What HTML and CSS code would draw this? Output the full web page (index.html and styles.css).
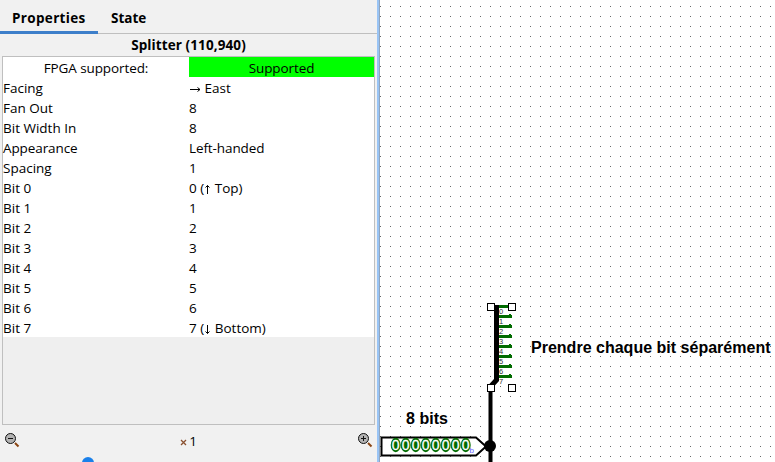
FILE: index.html
```html
<!DOCTYPE html>
<html lang="en">
<head>
<meta charset="utf-8">
<title>Circuit editor</title>
<link rel="stylesheet" href="styles.css">
</head>
<body>
<div class="app">
  <aside class="panel">
    <nav class="tabs">
      <div class="tab active">Properties</div>
      <div class="tab state">State</div>
    </nav>
    <h1 class="title">Splitter (110,940)</h1>
    <section class="attributes">
      <div class="row head"><span>FPGA supported:</span><span class="ok">Supported</span></div>
      <div class="row"><span>Facing</span><span><svg class="arrow wide" viewBox="0 0 12 14"><path d="M1 8.500H11M8.500 6.500L11 8.500L8.500 10.500"/></svg> East</span></div>
      <div class="row"><span>Fan Out</span><span>8</span></div>
      <div class="row"><span>Bit Width In</span><span>8</span></div>
      <div class="row snug"><span>Appearance</span><span>Left-handed</span></div>
      <div class="row"><span>Spacing</span><span>1</span></div>
      <div class="row"><span>Bit 0</span><span>0 (<svg class="arrow" viewBox="0 0 7 14"><path d="M3.500 12V3.500M1.500 5.500L3.500 3.500L5.500 5.500"/></svg> Top)</span></div>
      <div class="row"><span>Bit 1</span><span>1</span></div>
      <div class="row"><span>Bit 2</span><span>2</span></div>
      <div class="row"><span>Bit 3</span><span>3</span></div>
      <div class="row"><span>Bit 4</span><span>4</span></div>
      <div class="row"><span>Bit 5</span><span>5</span></div>
      <div class="row"><span>Bit 6</span><span>6</span></div>
      <div class="row"><span>Bit 7</span><span>7 (<svg class="arrow" viewBox="0 0 7 14"><path d="M3.500 3V11.500M1.500 9.500L3.500 11.500L5.500 9.500"/></svg> Bottom)</span></div>
    </section>
    <footer class="zoom">
      <svg class="lens" viewBox="0 0 16 16"><path class="handle" d="M10 10L13.500 13.500"/><circle cx="5.500" cy="5.500" r="5"/><path d="M3 5.500H8"/></svg>
      <span class="factor"><svg viewBox="0 0 7 7"><path d="M1 1L6 6M6 1L1 6"/></svg>1</span>
      <svg class="lens" viewBox="0 0 16 16"><path class="handle" d="M10 10L13.500 13.500"/><circle cx="5.500" cy="5.500" r="5"/><path d="M3 5.500H8M5.500 3V8"/></svg>
    </footer>
    <div class="slider"><i></i></div>
  </aside>
  <div class="divider"></div>
  <main class="canvas">
    <svg class="circuit" viewBox="380 0 395 462">
      <defs>
        <pattern id="grid" x="380" y="6" width="10" height="10" patternUnits="userSpaceOnUse"><rect width="1" height="1" fill="#666"/></pattern>
      </defs>
      <rect x="380" width="395" height="462" fill="url(#grid)"/>
      <path class="wire" d="M490.500 388V462"/>
      <path class="body" d="M496.500 305V380L491 386"/>
      <path class="pins" d="M499 306.500H512M499 316.500H512M499 326.500H512M499 336.500H512M499 346.500H512M499 356.500H512M499 366.500H512M499 376.500H512"/>
      <path class="bumps" d="M509 314.500H511M509 324.500H511M509 334.500H511M509 344.500H511M509 354.500H511M509 364.500H511M509 374.500H511"/>
      <g class="nums"><text x="499" y="314">0</text><text x="499" y="324">1</text><text x="499" y="334">2</text><text x="499" y="344">3</text><text x="499" y="354">4</text><text x="499" y="364">5</text><text x="499" y="374">6</text><text x="499" y="384">7</text></g>
      <g class="grips"><rect x="487.500" y="303.500" width="7" height="7"/><rect x="508.500" y="303.500" width="7" height="7"/><rect x="487.500" y="384.500" width="7" height="7"/><rect x="508.500" y="384.500" width="7" height="7"/></g>
      <path class="port" d="M381.500 437.500H476L486 446.500L476 455.500H381.500Z"/>
      <g class="bits"><ellipse cx="395.700" cy="445" rx="5" ry="7.200"/><ellipse cx="405.700" cy="445" rx="5" ry="7.200"/><ellipse cx="415.700" cy="445" rx="5" ry="7.200"/><ellipse cx="425.700" cy="445" rx="5" ry="7.200"/><ellipse cx="435.700" cy="445" rx="5" ry="7.200"/><ellipse cx="445.700" cy="445" rx="5" ry="7.200"/><ellipse cx="455.700" cy="445" rx="5" ry="7.200"/><ellipse cx="465.700" cy="445" rx="5" ry="7.200"/></g>
      <text class="value" x="391.800 401.800 411.800 421.800 431.800 441.800 451.800 461.800" y="450">00000000</text>
      <text class="radix" x="469.500" y="453">b</text>
      <circle cx="490" cy="446" r="6"/>
      <text class="label" x="406" y="424" textLength="42">8 bits</text>
      <text class="label" x="531" y="353" textLength="239.500">Prendre chaque bit séparément</text>
    </svg>
  </main>
</div>
</body>
</html>
```
FILE: styles.css
```css
* { box-sizing: border-box; }
body { margin: 0; font-family: "Open Sans", "Noto Sans", sans-serif; font-size: 13.5px; color: #000; }
.app { display: flex; width: 775px; height: 462px; overflow: hidden; background: #f1f1f1; }
.panel { width: 377px; flex: none; display: flex; flex-direction: column; }
.tabs { display: flex; height: 34px; border-bottom: 1px solid #bfbfbf; font-weight: 700; flex: none; }
.tab { height: 34px; padding: 2px 12px 0; line-height: 32px; letter-spacing: 0.33px; }
.tab.active { width: 98px; border-bottom: 3px solid #3d7fca; }
.tab.state { padding-left: 13px; letter-spacing: 0; }
.title { margin: 0; height: 22px; line-height: 23px; text-align: center; font-size: 13.5px; font-weight: 700; letter-spacing: 0.1px; flex: none; }
.attributes { width: 373px; height: 369px; margin-left: 2px; border: 1px solid #bfbfbf; background: #efefef; flex: none; }
.row { display: grid; grid-template-columns: 186px 1fr; height: 20px; line-height: 22px; background: #fff; white-space: pre; }
.snug { letter-spacing: -0.1px; }
.head { text-align: center; letter-spacing: -0.1px; }
.head span { height: 20px; }
.ok { background: #0f0; }
.arrow { width: 7px; height: 14px; fill: none; stroke: #000; vertical-align: -3px; }
.arrow.wide { width: 12px; vertical-align: -2px; }
.zoom { display: flex; justify-content: space-between; height: 32px; padding: 8px 3px 0 5px; flex: none; }
.lens { width: 16px; height: 16px; fill: #b3b3b3; stroke: #111; }
.lens .handle { stroke: #8b4513; stroke-width: 2; }
.factor { line-height: 17px; margin-left: -2px; }
.factor svg { width: 7px; height: 7px; stroke: #8a5030; stroke-width: 1.3; margin-right: 2px; }
.slider { height: 5px; padding-left: 82px; overflow: hidden; }
.slider i { display: block; width: 12px; height: 12px; border-radius: 50%; background: #1a80ea; }
.divider { width: 3px; background: #99c4f5; border-right: 1px solid #91a5bd; flex: none; }
.canvas { width: 395px; background: #fff; flex: none; }
.circuit { display: block; width: 395px; height: 462px; }
.wire { stroke: #000; stroke-width: 4; }
.body { fill: none; stroke: #000; stroke-width: 5; }
.pins { stroke: #006b00; stroke-width: 3; }
.bumps { stroke: #006b00; stroke-width: 1; }
.nums { font: 7.500px "Liberation Sans", sans-serif; fill: #333; }
.grips { fill: #fff; stroke: #000; }
.port { fill: #fff; stroke: #000; stroke-width: 2; }
.bits { fill: #006b00; }
.value { font: 14px "Liberation Sans", sans-serif; fill: #fff; stroke: #fff; stroke-width: 0.3; }
.radix { font: 8px "Liberation Sans", sans-serif; fill: #6060ff; }
.label { font: 700 16px "Liberation Sans", sans-serif; }
```
